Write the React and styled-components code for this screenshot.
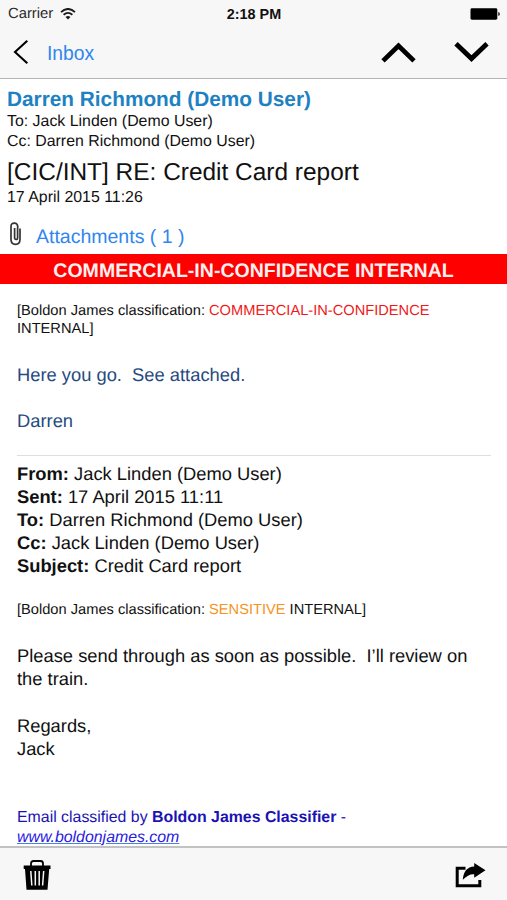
import React from "react";
import styled, { createGlobalStyle } from "styled-components";

const GlobalStyle = createGlobalStyle`
  body {
    margin: 0;
    background: #fff;
    font-family: 'Liberation Sans', Arial, sans-serif;
    text-rendering: geometricPrecision;
  }
`;

const Screen = styled.div`
  display: flex;
  flex-direction: column;
  width: 507px;
  height: 900px;
  overflow: hidden;
  color: #111;
`;

const TopBar = styled.header`
  display: flex;
  flex-direction: column;
  flex: none;
  box-sizing: border-box;
  height: 79px;
  background: #f7f7f7;
  border-bottom: 1px solid #b4b4b4;
`;

const StatusBar = styled.div`
  display: grid;
  grid-template-columns: 1fr auto 1fr;
  align-items: center;
  height: 26px;
  padding: 1px 7px 0 8px;
`;

const Carrier = styled.div`
  display: flex;
  align-items: center;
  gap: 7px;
  color: #2b2b2b;
  font-size: 14.8px;
  line-height: 19px;
`;

const Clock = styled.div`
  padding-top: 1px;
  font-size: 14.4px;
  font-weight: bold;
`;

const BatteryBox = styled.div`
  display: flex;
  justify-content: flex-end;
`;

const NavBar = styled.nav`
  display: flex;
  align-items: center;
  justify-content: space-between;
  height: 50px;
  padding: 0 18px 0 13px;
`;

const BackButton = styled.button`
  display: flex;
  align-items: center;
  gap: 18px;
  padding: 0;
  border: none;
  background: none;
  color: #2e86ee;
  font-family: inherit;
  font-size: 19.3px;
`;

const BackLabel = styled.span`
  padding-top: 3px;
`;

const Arrows = styled.div`
  display: flex;
  gap: 38px;
`;

const MailHeader = styled.section`
  display: flex;
  flex-direction: column;
  flex: none;
  box-sizing: border-box;
  height: 175px;
  padding: 8px 7px 0;
`;

const Sender = styled.div`
  color: #1e82c2;
  font-size: 20.8px;
  font-weight: bold;
  line-height: 25px;
`;

const MetaLine = styled.div`
  font-size: 15.9px;
  line-height: 19.5px;
`;

const Subject = styled.h1`
  margin: 7px 0 0;
  font-size: 24.45px;
  font-weight: normal;
  line-height: 30px;
`;

const Attachments = styled.div`
  display: flex;
  align-items: center;
  gap: 14px;
  height: 33px;
  margin-top: 10px;
  padding-left: 2px;
  color: #2e86ee;
  font-size: 19.5px;
`;

const AttachmentsLabel = styled.span`
  padding-top: 6px;
`;

const Banner = styled.div`
  flex: none;
  height: 30px;
  background: #fe0000;
  color: #fff0f0;
  font-size: 19.55px;
  font-weight: bold;
  line-height: 34px;
  text-align: center;
`;

const MailBody = styled.main`
  flex: 1;
  min-height: 0;
  overflow: hidden;
  padding: 18px 16px 0 17px;
`;

const Classification = styled.p`
  margin: 0;
  font-size: 14.65px;
  line-height: 18.2px;
`;

const Marking = styled.span`
  color: ${(props) => props.$color};
`;

const Paragraph = styled.p`
  margin: ${(props) => props.$top || "23.2px"} 0 0;
  color: ${(props) => props.$color || "#111"};
  font-size: 18.33px;
  line-height: 23.2px;
  white-space: pre-wrap;
`;

const Quoted = styled.div`
  margin: 22.5px 0 23px;
  padding-top: 5.5px;
  border-top: 1px solid #dedede;
`;

const Footer = styled.p`
  margin: 47.6px 0 0;
  color: #1a12b4;
  font-size: 15.88px;
  line-height: 20px;
`;

const FooterLink = styled.a`
  color: #2a20e0;
  font-style: italic;
  text-decoration: underline;
  text-decoration-color: #4a7fe8;
`;

const ToolBar = styled.footer`
  display: flex;
  align-items: center;
  justify-content: space-between;
  flex: none;
  box-sizing: border-box;
  height: 54px;
  padding: 1px 21px 0 23px;
  border-top: 2px solid #c2c2c2;
  background: #f7f7f7;
`;

const WifiIcon = () => (
  <svg width="16" height="12" viewBox="0 0 16 12" fill="none" stroke="#1c1c1c">
    <path d="M1 4.1Q8-2.2 15 4.1" strokeWidth="1.9" />
    <path d="M3.6 6.8Q8 3 12.4 6.8" strokeWidth="1.8" />
    <path d="M8 11.6L5.5 8.9Q8 6.9 10.5 8.9Z" fill="#1c1c1c" stroke="none" />
  </svg>
);

const BatteryIcon = () => (
  <svg width="30" height="12" viewBox="0 0 30 12">
    <rect x="0.5" y="0.3" width="26.8" height="11.4" rx="1.4" />
    <path d="M28.2 4Q30 4.4 30 6T28.2 8Z" fill="#333" />
  </svg>
);

const BackIcon = () => (
  <svg width="16" height="26" viewBox="0 0 16 26" fill="none" stroke="#000" strokeWidth="2.1">
    <path d="M14.3 1.8L2 13L14.3 24.3" />
  </svg>
);

const ArrowIcon = ({ d }) => (
  <svg width="35" height="22" viewBox="0 0 35 22" fill="none" stroke="#000" strokeWidth="4.8">
    <path d={d} />
  </svg>
);

const ClipIcon = () => (
  <svg width="13" height="24" viewBox="0 0 13 24" fill="none" stroke="#333" strokeWidth="1.7">
    <path d="M8.6 6V15.7Q8.6 17.5 7.1 17.5T5.6 15.7V6M8.7 6V4.4Q8.7 1.2 5.3 1.2T2 4.4V17.3Q2 22.4 6.5 22.4T11 17.3V6.5" />
  </svg>
);

const TrashIcon = () => (
  <svg width="28" height="30" viewBox="0 0 28 30">
    <path d="M8 6V3.5Q8 1 10.5 1H17.5Q20 1 20 3.5V6" fill="none" stroke="#000" strokeWidth="1.8" />
    <path d="M0.7 5.5H27.5V9H26.2L24.5 29.8H3.5L2 9H0.7Z" />
    <path d="M7.8 11L8.8 25.5M12.3 11V25.5M16.2 11V25.5M20.7 11L19.6 25.5" stroke="#f7f7f7" strokeWidth="1.5" />
  </svg>
);

const ShareIcon = () => (
  <svg width="31" height="26" viewBox="0 0 31 26">
    <path d="M10.5 6.2H2.2V23.8H24.8V18" fill="none" stroke="#000" strokeWidth="3" />
    <path d="M19.2 1L30.5 8.3L19.2 15.8V12.2Q13.5 11.6 7.8 17.8Q8.7 5.2 19.2 4.6Z" />
  </svg>
);

const quotedFields = [
  ["From:", "Jack Linden (Demo User)"],
  ["Sent:", "17 April 2015 11:11"],
  ["To:", "Darren Richmond (Demo User)"],
  ["Cc:", "Jack Linden (Demo User)"],
  ["Subject:", "Credit Card report"],
];

const App = () => (
  <Screen>
    <GlobalStyle />
    <TopBar>
      <StatusBar>
        <Carrier>
          Carrier
          <WifiIcon />
        </Carrier>
        <Clock>2:18 PM</Clock>
        <BatteryBox>
          <BatteryIcon />
        </BatteryBox>
      </StatusBar>
      <NavBar>
        <BackButton>
          <BackIcon />
          <BackLabel>Inbox</BackLabel>
        </BackButton>
        <Arrows>
          <ArrowIcon d="M2 19.9L17.5 4.9L33 19.9" />
          <ArrowIcon d="M2 2.8L17.5 17.6L33 2.8" />
        </Arrows>
      </NavBar>
    </TopBar>

    <MailHeader>
      <Sender>Darren Richmond (Demo User)</Sender>
      <MetaLine>To: Jack Linden (Demo User)</MetaLine>
      <MetaLine>Cc: Darren Richmond (Demo User)</MetaLine>
      <Subject>[CIC/INT] RE: Credit Card report</Subject>
      <MetaLine>17 April 2015 11:26</MetaLine>
      <Attachments>
        <ClipIcon />
        <AttachmentsLabel>Attachments ( 1 )</AttachmentsLabel>
      </Attachments>
    </MailHeader>

    <Banner>COMMERCIAL-IN-CONFIDENCE INTERNAL</Banner>

    <MailBody>
      <Classification>
        [Boldon James classification: <Marking $color="#f01818">COMMERCIAL-IN-CONFIDENCE</Marking> INTERNAL]
      </Classification>
      <Paragraph $top="25px" $color="#264a80">{"Here you go.  See attached."}</Paragraph>
      <Paragraph $top="22.8px" $color="#264a80">Darren</Paragraph>

      <Quoted>
        {quotedFields.map(([label, value]) => (
          <Paragraph key={label} $top="0">
            <b>{label}</b> {value}
          </Paragraph>
        ))}
      </Quoted>

      <Classification>
        [Boldon James classification: <Marking $color="#f7941d">SENSITIVE</Marking> INTERNAL]
      </Classification>
      <Paragraph $top="25.2px">{"Please send through as soon as possible.  I’ll review on the train."}</Paragraph>
      <Paragraph $top="23.4px">
        Regards,
        <br />
        Jack
      </Paragraph>

      <Footer>
        Email classified by <b>Boldon James Classifier</b> -<br />
        <FooterLink>www.boldonjames.com</FooterLink>
      </Footer>
    </MailBody>

    <ToolBar>
      <TrashIcon />
      <ShareIcon />
    </ToolBar>
  </Screen>
);

export default App;
